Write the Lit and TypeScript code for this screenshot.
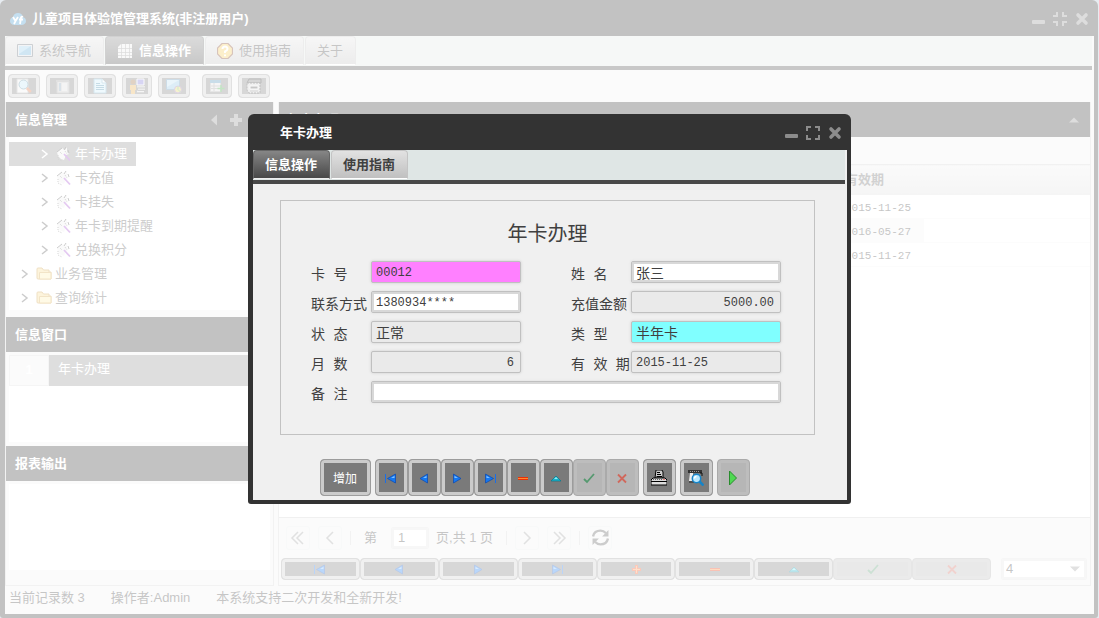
import { LitElement, html, svg, css, nothing } from "lit";
import { customElement, property, state } from "lit/decorators.js";
import { classMap } from "lit/directives/class-map.js";

const glyph = (body: unknown, size = 16) =>
  html`<svg width=${size} height=${size} viewBox="0 0 16 16" aria-hidden="true">${body}</svg>`;

const icons: Record<string, unknown> = {
  first: svg`<path d="M2 4h1v9H2z" fill="#1a6fe8"/><path d="M12.500 4v9L4.500 8.500z" fill="#1478f2" stroke="#0a48b0" stroke-width=".7"/><path d="M11.500 5.800v2.200L8 8z" fill="#7fc0ff"/>`,
  prev: svg`<path d="M11.500 4v9L4 8.500z" fill="#1478f2" stroke="#0a48b0" stroke-width=".7"/><path d="M10.500 5.800v2.200L7 8z" fill="#7fc0ff"/>`,
  next: svg`<path d="M4.500 4v9L12 8.500z" fill="#1478f2" stroke="#0a48b0" stroke-width=".7"/><path d="M5.500 5.800v2.200L9 8z" fill="#7fc0ff"/>`,
  last: svg`<path d="M13 4h1v9h-1z" fill="#1a6fe8"/><path d="M3.500 4v9L11.500 8.500z" fill="#1478f2" stroke="#0a48b0" stroke-width=".7"/><path d="M4.500 5.800v2.200L8 8z" fill="#7fc0ff"/>`,
  add: svg`<path d="M7 4h3v3h3v3h-3v3H7v-3H4V7h3z" fill="#f04a18"/><path d="M8 5h1v3h3v1H9v3H8V9H5V8h3z" fill="#ff9a50"/>`,
  remove: svg`<path d="M3 7h10v3H3z" fill="#e83208"/><path d="M3 8h10v1H3z" fill="#ff8a30"/>`,
  edit: svg`<path d="M8 6l5 5H3z" fill="#18b4cc" stroke="#08788c" stroke-width=".7"/><path d="M8 7l2 2H6z" fill="#8eeaf4"/>`,
  check: svg`<path d="M3 9l3 3 7-8" fill="none" stroke="#55996f" stroke-width="1.800"/>`,
  cross: svg`<path d="M4 4.500l8 8M12 4.500l-8 8" fill="none" stroke="#d0685c" stroke-width="1.800"/>`,
  run: svg`<path d="M4.500 1v14l7-7z" fill="#4fd852" stroke="#288c2c"/>`,
  printer: svg`<path d="M5 0h6l1 2v6H4z" fill="#ccc" stroke="#000"/><path d="M6 2.500h3M6 4.500h4M5.500 6.500H11" stroke="#000"/><path d="M2 8h12l2 2v5H0v-5z" fill="#ddd" stroke="#000"/><path d="M0 11.500h16" stroke="#000"/><path d="M2 9.500h9" stroke="#666" stroke-dasharray="1 1"/><path d="M12.500 9h1v1h-1z" fill="#f22"/>`,
  preview: svg`<path d="M0 0h14v3H0z" fill="#333"/><path d="M2 1.500h10" stroke="#999" stroke-dasharray="1 1"/><path d="M2 3h3v8H1z" fill="#eee"/><path d="M1 12h5" stroke="#222"/><path d="M12 3h2v3" fill="none" stroke="#111"/><circle cx="8.500" cy="8.500" r="4.200" fill="#b8e8ff" stroke="#1684c8" stroke-width="1.500"/><path d="M6.500 8.500q0-2 2-2" fill="none" stroke="#fff" stroke-width="1.500"/><path d="M11.500 11.500l4 4" stroke="#1684c8" stroke-width="2.500"/>`,
  screen: svg`<path d="M.5 1.500h15v12H.5z" fill="#d7dbe0" stroke="#59636c"/><path d="M2 3h12v9H2z" fill="#62abd8"/><path d="M2 3h12L2 11z" fill="#96cdec"/>`,
  grid: svg`<path d="M4 1h11v14H1V4z" fill="#ececec"/><path d="M1 5.500h14M1 9.500h14M1 12.500h14M4.500 1v14M8.500 1v14M12.500 1v14" stroke="#888" stroke-width=".7"/>`,
  help: svg`<path d="M5 .5h6L15.500 5v6L11 15.500H5L.5 11V5z" fill="#f5c850" stroke="#7a3a20" stroke-width="1.200"/><path d="M5.500 6q0-2.500 2.500-2.500T10.500 6Q10.500 7.200 8 8.500v1.500" fill="none" stroke="#fff" stroke-width="2"/><path d="M7 11.500h2v1.800H7z" fill="#fff"/>`,
  search: svg`<path d="M1 1h11v14H1z" fill="#eee" stroke="#aaa"/><circle cx="7.500" cy="6.500" r="4.500" fill="#bfe4f6" stroke="#58899d"/><path d="M10.800 10l4 4" stroke="#d86c3c" stroke-width="2.500"/>`,
  form: svg`<path d="M3 3h12v12H3z" fill="#c4c4c4" stroke="#999"/><path d="M2 2h13v2H2z" fill="#999"/><path d="M5 6h2M5 8h2M5 10h2M5 12h2" stroke="#3d79a8"/><path d="M8 6h5M8 8h5M8 10h5M8 12h5" stroke="#eee"/>`,
  doc: svg`<path d="M2 1h8l4 4v10H2z" fill="#c9e9f8" stroke="#77afc9"/><path d="M10 1v4h4" fill="#fff" stroke="#77afc9"/><path d="M4 5.500h4M4 7.500h8M4 9.500h8M4 11.500h8" stroke="#4289ac"/>`,
  user: svg`<circle cx="4" cy="4" r="2.500" fill="#9c6a38"/><path d="M1 7h6v5H6v4H2v-4H1z" fill="#e6aa48"/><path d="M8 1h7v6H8z" fill="#7b74d8" stroke="#eee"/><path d="M8 9h8M9 11h7M8 13.500h7" stroke="#ddd" stroke-width="1.500"/><path d="M8 10h8M9 12.500h7" stroke="#777"/>`,
  config: svg`<path d="M.5 1.500h13v10H.5z" fill="#8dc3e3" stroke="#5989ad"/><path d="M1 2h12L1 9z" fill="#b9ddf1"/><circle cx="12" cy="11.500" r="3.500" fill="#dcd05c" stroke="#946ab0"/><path d="M12 8v3.500l2.500 2.500" stroke="#5cb85c" fill="none"/>`,
  tableAdd: svg`<path d="M1.500 3.500h10v10h-10z" fill="#ddd" stroke="#aaa"/><path d="M1 2h11v3H1z" fill="#4b8eb6"/><path d="M2 8h9M2 10.500h9M5 5v8" stroke="#999"/><path d="M12 7v7M8.500 10.500h7" stroke="#36a83a" stroke-width="1.500"/>`,
  report: svg`<path d="M3 1h12v4H1z" fill="#777" stroke="#222"/><path d="M1 5h13v10H3q-2-2-2-4z" fill="#ccc" stroke="#333" stroke-dasharray="2 1"/><path d="M4 8h8v3H4z" fill="#444" stroke="#eee"/><path d="M4 13h8" stroke="#777"/>`,
  folder: svg`<path d="M1 12.500V3q0-1 1-1h4l1.500 2H13v2h2v7H2z" fill="#f7d98a" stroke="#c9963a"/><path d="M3.500 6.500H15V13H3.500z" fill="#ffefaa" stroke="#d4a544"/>`,
  wand: svg`<path d="M1 6l5-4 3 2 2-3v5l2 2-3 1-2 5-3-1-3-3z" fill="#efefef"/><path d="M1 6l5-4M8 4l2-3M12 4l1 3" stroke="#555" fill="none"/><path d="M2 9v4l4 2M4 6l2 2M9 5l2 3" stroke="#777" stroke-dasharray="1 1" fill="none"/><path d="M8 8l6 6.500" stroke="#a34bd0" stroke-width="1.800"/>`,
  brand: svg`<path d="M4 14q-4-1-4-4 0-3 3-4 1-4 5-4 4 0 5 4 3 1 3 4t-4 4z" fill="#3a93cc"/><path d="M3 6l2.500 4L8 6M5.500 10L4 13M10 13l1-6q0-2 2-1M9 8.500h4" fill="none" stroke="#fff" stroke-width="1.800"/>`,
  minimize: svg`<rect x="2" y="9" width="13" height="4" rx="1"/>`,
  maximize: svg`<path d="M1 1h5v2H3v3H1zM10 1h5v5h-2V3h-3zM1 10h2v3h3v2H1zM13 10h2v5h-5v-2h3z"/>`,
  restore: svg`<path d="M4 1h2v5H1V4h3zM10 1h2v3h3v2h-5zM1 10h5v5H4v-3H1zM10 10h5v2h-3v3h-2z"/>`,
  close: svg`<path d="M4 4l8 8M12 4l-8 8" stroke="currentColor" stroke-width="3.600" stroke-linecap="round"/>`,
  left: svg`<path d="M11 2.500v11L5 8z"/>`,
  up: svg`<path d="M3 10.500h10l-5-5z"/>`,
  down: svg`<path d="M3 5.500h10l-5 5z"/>`,
  plus: svg`<path d="M6 2h4v4h4v4h-4v4H6v-4H2V6h4z"/>`,
  chevron: svg`<path d="M5 4l5 4-5 4" fill="none" stroke="currentColor" stroke-width="1.500"/>`,
  pageFirst: svg`<path d="M8 2L2 8l6 6M13 2L7 8l6 6" fill="none" stroke="currentColor" stroke-width="1.500"/>`,
  pagePrev: svg`<path d="M11 2L5 8l6 6" fill="none" stroke="currentColor" stroke-width="1.500"/>`,
  pageNext: svg`<path d="M5 2l6 6-6 6" fill="none" stroke="currentColor" stroke-width="1.500"/>`,
  pageLast: svg`<path d="M3 2l6 6-6 6M8 2l6 6-6 6" fill="none" stroke="currentColor" stroke-width="1.500"/>`,
  refresh: svg`<path d="M1 7q1-5.500 7-5.500 3 0 5 2.200M15 9q-1 5.500-7 5.500-3 0-5-2.200" fill="none" stroke="currentColor" stroke-width="2.200"/><path d="M15.500 1v6h-6zM.5 15V9h6z"/>`,
};

interface IconButton {
  icon: string;
  label: string;
  disabled?: boolean;
}

@customElement("app-window")
export class AppWindow extends LitElement {
  @property() heading = "";
  @property({ type: Boolean }) maximized = false;

  static styles = css`
    :host {
      display: flex;
      flex-direction: column;
      box-sizing: border-box;
      padding: 0 4px 4px 5px;
      background: #333;
      border-radius: 6px 6px 3px 3px;
    }
    .bar {
      display: flex;
      align-items: center;
      box-sizing: border-box;
      height: 36px;
      padding: 2px 4px 0 5px;
      color: #fff;
      font-weight: 700;
    }
    .mark {
      display: flex;
      width: 22px;
    }
    h1 {
      flex: 1;
      margin: 0;
      font-size: 13px;
      line-height: 20px;
    }
    .tools {
      display: flex;
      gap: 6px;
    }
    button {
      display: flex;
      padding: 0;
      border: 0;
      background: none;
      color: #8c8c8c;
    }
    svg {
      fill: currentColor;
    }
    .content {
      display: flex;
      flex: 1;
      flex-direction: column;
      background: #f0f0f0;
    }
  `;

  render() {
    return html`
      <header class="bar">
        <span class="mark">${this.maximized ? glyph(icons.brand) : nothing}</span>
        <h1>${this.heading}</h1>
        <div class="tools">
          <button aria-label="最小化">${glyph(icons.minimize)}</button>
          <button aria-label="最大化">${glyph(this.maximized ? icons.restore : icons.maximize)}</button>
          <button aria-label="关闭">${glyph(icons.close)}</button>
        </div>
      </header>
      <div class="content"><slot></slot></div>
    `;
  }
}

@customElement("app-root")
export class AppRoot extends LitElement {
  @state() private mainTab = 1;
  @state() private dialogTab = 0;

  private mainTabs = [
    { text: "系统导航", icon: "screen" },
    { text: "信息操作", icon: "grid" },
    { text: "使用指南", icon: "help" },
    { text: "关于", icon: "" },
  ];
  private dialogTabs = [
    { text: "信息操作", icon: "" },
    { text: "使用指南", icon: "" },
  ];
  private tools: IconButton[] = [
    { icon: "search", label: "查询" },
    { icon: "form", label: "表单" },
    { icon: "doc", label: "文档" },
    { icon: "user", label: "用户" },
    { icon: "config", label: "设置" },
  ];
  private reportTools: IconButton[] = [
    { icon: "tableAdd", label: "新建表" },
    { icon: "report", label: "报表" },
  ];
  private steps: IconButton[] = [
    { icon: "first", label: "首条" },
    { icon: "prev", label: "上一条" },
    { icon: "next", label: "下一条" },
    { icon: "last", label: "末条" },
  ];
  private edits: IconButton[] = [
    { icon: "remove", label: "删除" },
    { icon: "edit", label: "修改" },
    { icon: "check", label: "确认", disabled: true },
    { icon: "cross", label: "取消", disabled: true },
  ];
  private leaves = ["年卡办理", "卡充值", "卡挂失", "年卡到期提醒", "兑换积分"];
  private folders = ["业务管理", "查询统计"];
  private dates = ["2015-11-25", "2016-05-27", "2015-11-27"];

  static styles = css`
    * {
      box-sizing: border-box;
    }
    :host {
      display: block;
      min-height: 100vh;
      background: #b0c0d0;
      color: #404040;
      font: 13px/20px "Liberation Sans", "Noto Sans CJK SC", sans-serif;
    }
    button,
    input,
    select {
      margin: 0;
      color: inherit;
      font: inherit;
    }
    svg {
      display: block;
      flex: none;
      fill: currentColor;
    }
    h2 {
      margin: 0;
      font-size: 13px;
    }
    .main {
      min-height: 100vh;
      margin-right: 1px;
    }

    .tabs {
      display: flex;
      gap: 1px;
      height: 34px;
      margin-right: 2px;
      background: #dfe6e5;
      border-bottom: 4px solid #484848;
    }
    .tab {
      display: flex;
      align-items: center;
      gap: 6px;
      height: 29px;
      padding: 0 12px 0 11px;
      border: 1px solid #c4c4c4;
      border-bottom-color: #fff;
      border-radius: 4px 4px 0 0;
      background: linear-gradient(#e2e2e2, #c0c0c0);
      color: #404040;
    }
    .tab.active {
      border-color: #666;
      border-bottom-color: #eee;
      background: linear-gradient(#868686, #484848);
      color: #fff;
      font-weight: 700;
    }
    .dialog .tab {
      font-weight: 700;
    }

    .toolbar {
      display: flex;
      gap: 6px;
      height: 32px;
      padding: 4px 3px;
    }
    .toolbar .gap {
      width: 0;
    }
    .key {
      display: flex;
      align-items: center;
      justify-content: center;
      width: 32px;
      height: 24px;
      padding: 0;
      border: 1px solid #9c9c9c;
      border-radius: 4px;
      background: #7a7a7a;
      box-shadow: inset 0 0 0 3px #cbcbcb;
      color: #fff;
    }
    .toolbar .key:nth-of-type(4),
    .toolbar .key:nth-of-type(6) {
      width: 30px;
    }
    .key:disabled {
      border-color: #aaa;
      background: #b6b6b6;
      box-shadow: inset 0 0 0 3px #bdbdbd;
    }

    .body {
      display: flex;
      flex: 1;
      gap: 4px;
      margin-right: 3px;
    }
    .side {
      display: flex;
      flex: none;
      flex-direction: column;
      width: 269px;
      border: 1px solid #d4d4d4;
      border-top: 0;
    }
    .head {
      display: flex;
      align-items: center;
      gap: 6px;
      height: 35px;
      padding: 0 8px;
      background: #333;
      color: #fff;
    }
    .head h2 {
      flex: 1;
    }
    .head button {
      display: flex;
      padding: 0;
      border: 0;
      background: none;
      color: #8c8c8c;
    }
    .side .head {
      padding: 0 29px 0 9px;
    }
    .tree {
      margin: 0 3px 7px;
      padding: 5px 0 0;
      background: #fff;
      list-style: none;
    }
    .node {
      display: flex;
      align-items: center;
      gap: 3px;
      width: fit-content;
      height: 24px;
      padding: 0 9px 0 8px;
      color: #555;
    }
    .node.leaf {
      padding-left: 28px;
    }
    .node.picked {
      background: #919191;
      color: #fff;
    }
    .windows {
      height: 87px;
      margin: 3px 3px 4px;
      background: #fff;
    }
    .entry {
      display: flex;
      height: 31px;
      background: #919191;
      color: #fff;
      line-height: 28px;
    }
    .entry b {
      width: 40px;
      border: 1px solid #ddd;
      background: #f0f0f0;
      text-align: center;
    }
    .entry span {
      padding-left: 9px;
    }
    .output {
      flex: 1;
      margin: 3px 3px 15px;
      background: #fff;
    }

    .records {
      display: flex;
      flex: 1;
      flex-direction: column;
      border: 1px solid #d4d4d4;
      border-top: 0;
    }
    .filter {
      height: 27px;
    }
    .grid {
      flex: 1;
      background: #fff;
      border-bottom: 1px solid #ccc;
    }
    table {
      width: 100%;
      border-collapse: collapse;
      table-layout: fixed;
    }
    th {
      height: 30px;
      padding: 0 6px;
      border-top: 1px solid #d0d0d0;
      background: linear-gradient(#eee, #ddd);
      text-align: left;
      color: #666;
    }
    td {
      height: 24px;
      padding: 3px 6px 0;
      border-bottom: 1px solid #f4f4f4;
      font: 11px/20px "Liberation Mono", monospace;
    }
    tr:nth-child(even) td:not(.rest) {
      background: #f4f4f4;
    }
    .wide {
      width: 560px;
    }
    .date {
      width: 85px;
    }
    .pager {
      display: flex;
      align-items: center;
      gap: 8px;
      height: 39px;
      padding: 0 7px;
    }
    .page {
      display: flex;
      align-items: center;
      justify-content: center;
      width: 24px;
      height: 24px;
      padding: 0;
      border: 1px solid #e6ecea;
      border-radius: 3px;
      background: #f0f2f2;
      color: #555;
    }
    .page:disabled {
      color: #999;
    }
    .rule {
      width: 1px;
      height: 14px;
      background: #d4d4d4;
    }
    .count {
      display: flex;
      align-items: center;
      gap: 7px;
      padding: 0 5px;
    }
    .field {
      width: 100%;
      height: 22px;
      padding: 0 4px;
      border: 1px solid #c0c0c0;
      border-radius: 2px;
      outline: 0;
      background: #fff;
      box-shadow: inset 0 0 0 2px #d8d8d8, 0 0 3px #ddd;
    }
    .count .field {
      width: 38px;
      padding: 0 6px;
    }
    .records .field {
      border-color: #e2e2e2;
      box-shadow: inset 0 0 0 2px #e4e4e4;
    }
    .actions {
      display: flex;
      gap: 10px;
      padding: 1px 3px 5px 2px;
    }
    .actions .keys {
      display: flex;
      flex: 1;
    }
    .actions .key {
      flex: 1;
      height: 22px;
    }
    .combo {
      display: grid;
      align-items: center;
      width: 86px;
    }
    .combo > * {
      grid-area: 1 / 1;
    }
    .combo svg {
      justify-self: end;
      margin-right: 4px;
      color: #999;
      pointer-events: none;
    }
    .combo .field {
      appearance: none;
    }
    .status {
      display: flex;
      gap: 26px;
      height: 28px;
      padding: 2px 4px;
    }

    .mask {
      position: fixed;
      inset: 0;
      display: flex;
      align-items: center;
      justify-content: center;
      background: rgba(255, 255, 255, 0.7);
    }
    .dialog {
      width: min(603px, 100%);
    }
    fieldset {
      min-width: 0;
      margin: 16px 32px 24px 27px;
      padding: 17px 0 31px;
      border: 1px solid #c2c2c2;
    }
    .title {
      margin-bottom: 11px;
      font-size: 20px;
      font-weight: 400;
      line-height: 32px;
      text-align: center;
    }
    .form {
      display: grid;
      grid-template-columns: 60px 1fr 50px 60px 1fr;
      gap: 8px 0;
      margin: 0 33px 0 30px;
    }
    .form label {
      height: 22px;
      padding-top: 3px;
      font: 14px/22px "Liberation Mono", "Noto Sans CJK SC", monospace;
      white-space: nowrap;
    }
    .form .second {
      grid-column: 4;
    }
    .form .full {
      grid-column: 2 / 6;
    }
    .form .field {
      min-width: 0;
      padding: 2px 4px 0;
      font: 12px/18px "Liberation Mono", "Noto Sans CJK SC", monospace;
    }
    .form .text {
      padding-top: 0;
      font-size: 14px;
    }
    .form .readonly {
      background: #eaeaea;
      box-shadow: 0 0 3px #ccc;
    }
    .form .number {
      padding-right: 6px;
      text-align: right;
    }
    .form .pink {
      background: #ff80ff;
    }
    .form .cyan {
      background: #80ffff;
    }
    .commands {
      display: flex;
      justify-content: center;
      gap: 4px;
      padding: 0 31px 4px 0;
    }
    .commands .keys {
      display: flex;
    }
    .commands .key {
      width: 33px;
      height: 37px;
    }
    .commands .create {
      width: 51px;
      padding-top: 2px;
      font-size: 12px;
    }
  `;

  private key(b: IconButton) {
    return html`<button class="key" aria-label=${b.label} ?disabled=${b.disabled ?? false}>${glyph(icons[b.icon])}</button>`;
  }

  private tabBar(tabs: { text: string; icon: string }[], active: number, pick: (i: number) => void) {
    return html`<nav class="tabs">
      ${tabs.map(
        (t, i) => html`<button class=${classMap({ tab: true, active: i === active })} @click=${() => pick(i)}>
          ${t.icon ? glyph(icons[t.icon]) : nothing}${t.text}
        </button>`
      )}
    </nav>`;
  }

  private sidePanel() {
    return html`<aside class="side">
      <div class="head">
        <h2>信息管理</h2>
        <button aria-label="收起">${glyph(icons.left)}</button>
        <button aria-label="展开">${glyph(icons.plus)}</button>
      </div>
      <ul class="tree">
        ${this.leaves.map(
          (t, i) => html`<li class=${classMap({ node: true, leaf: true, picked: i === 0 })}>
            ${glyph(icons.chevron)}${glyph(icons.wand)}<span>${t}</span>
          </li>`
        )}
        ${this.folders.map(
          (t) => html`<li class="node">${glyph(icons.chevron)}${glyph(icons.folder)}<span>${t}</span></li>`
        )}
      </ul>
      <div class="head"><h2>信息窗口</h2></div>
      <div class="windows">
        <div class="entry"><b>1</b><span>年卡办理</span></div>
      </div>
      <div class="head"><h2>报表输出</h2></div>
      <div class="output"></div>
    </aside>`;
  }

  private recordsPanel() {
    return html`<section class="records">
      <div class="head">
        <h2>年卡办理</h2>
        <button aria-label="折叠">${glyph(icons.up)}</button>
      </div>
      <div class="filter"></div>
      <div class="grid">
        <table>
          <thead>
            <tr>
              <th class="wide"></th>
              <th class="date">有效期</th>
              <th></th>
            </tr>
          </thead>
          <tbody>
            ${this.dates.map((d) => html`<tr><td></td><td>${d}</td><td class="rest"></td></tr>`)}
          </tbody>
        </table>
      </div>
      <div class="pager">
        <button class="page" aria-label="首页" disabled>${glyph(icons.pageFirst)}</button>
        <button class="page" aria-label="上一页" disabled>${glyph(icons.pagePrev)}</button>
        <span class="rule"></span>
        <span class="count">
          <label for="page">第</label>
          <span></span>
          <input class="field" id="page" .value=${"1"} />
          <span>页,共 1 页</span>
        </span>
        <span class="rule"></span>
        <button class="page" aria-label="下一页" disabled>${glyph(icons.pageNext)}</button>
        <button class="page" aria-label="末页" disabled>${glyph(icons.pageLast)}</button>
        <span class="rule"></span>
        <button class="page" aria-label="刷新">${glyph(icons.refresh, 17)}</button>
      </div>
      <div class="actions">
        <div class="keys">
          ${this.steps.map((b) => this.key(b))}${this.key({ icon: "add", label: "增加" })}${this.edits.map((b) =>
            this.key(b)
          )}
        </div>
        <div class="combo">
          <select class="field" aria-label="每页行数">
            <option>4</option>
          </select>
          ${glyph(icons.down)}
        </div>
      </div>
    </section>`;
  }

  private dialog() {
    return html`<app-window class="dialog" heading="年卡办理" role="dialog">
      ${this.tabBar(this.dialogTabs, this.dialogTab, (i) => (this.dialogTab = i))}
      <fieldset>
        <h2 class="title">年卡办理</h2>
        <div class="form">
          <label for="card">卡 号</label>
          <input class="field readonly pink" id="card" readonly .value=${"00012"} />
          <label class="second" for="name">姓 名</label>
          <input class="field text" id="name" .value=${"张三"} />
          <label for="phone">联系方式</label>
          <input class="field" id="phone" .value=${"1380934****"} />
          <label class="second" for="amount">充值金额</label>
          <input class="field readonly number" id="amount" readonly .value=${"5000.00"} />
          <label for="state">状 态</label>
          <input class="field readonly text" id="state" readonly .value=${"正常"} />
          <label class="second" for="kind">类 型</label>
          <input class="field readonly text cyan" id="kind" readonly .value=${"半年卡"} />
          <label for="months">月 数</label>
          <input class="field readonly number" id="months" readonly .value=${"6"} />
          <label class="second" for="expiry">有 效 期</label>
          <input class="field readonly" id="expiry" readonly .value=${"2015-11-25"} />
          <label for="note">备 注</label>
          <input class="field full" id="note" />
        </div>
      </fieldset>
      <div class="commands">
        <button class="key create">增加</button>
        <div class="keys">${this.steps.map((b) => this.key(b))}${this.edits.map((b) => this.key(b))}</div>
        ${this.key({ icon: "printer", label: "打印" })} ${this.key({ icon: "preview", label: "预览" })}
        ${this.key({ icon: "run", label: "执行", disabled: true })}
      </div>
    </app-window>`;
  }

  render() {
    return html`
      <app-window class="main" heading="儿童项目体验馆管理系统(非注册用户)" maximized>
        ${this.tabBar(this.mainTabs, this.mainTab, (i) => (this.mainTab = i))}
        <div class="toolbar">
          ${this.tools.map((b) => this.key(b))}<span class="gap"></span>${this.reportTools.map((b) => this.key(b))}
        </div>
        <div class="body">${this.sidePanel()}${this.recordsPanel()}</div>
        <footer class="status">
          <span>当前记录数 3</span><span>操作者:Admin</span><span>本系统支持二次开发和全新开发!</span>
        </footer>
      </app-window>
      <div class="mask">${this.dialog()}</div>
    `;
  }
}
